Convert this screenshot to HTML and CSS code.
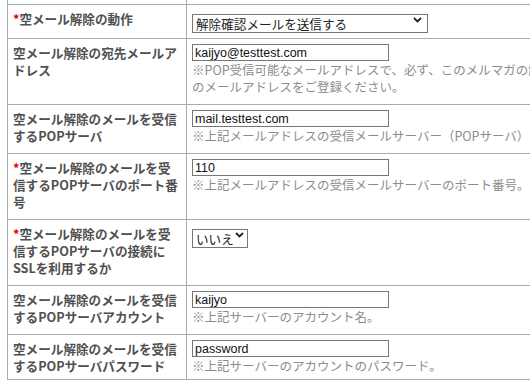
FILE: index.html
```html
<!DOCTYPE html>
<html lang="ja">
<head>
  <meta charset="UTF-8">
  <title>空メール解除設定</title>
  <link rel="stylesheet" href="styles.css">
</head>
<body>

  <table class="form-table">
    <colgroup>
      <col class="col-label">
      <col>
    </colgroup>
    <tr class="row-prev">
      <th></th>
      <td></td>
    </tr>
    <tr class="row-compact">
      <th><span class="req">*</span>空メール解除の動作</th>
      <td>
        <span class="select-wrap">
          <select class="select select-wide">
            <option>解除確認メールを送信する</option>
            <option>即時解除する</option>
          </select>
          <svg class="chevron" width="9" height="6" viewBox="0 0 9 6"><path d="M1 1l3.5 3.5L8 1" fill="none" stroke="#222" stroke-width="1.8"/></svg>
        </span>
      </td>
    </tr>
    <tr>
      <th>空メール解除の宛先メールアドレス</th>
      <td>
        <input class="text" type="text" value="kaijyo@testtest.com">
        <div class="note">※POP受信可能なメールアドレスで、必ず、このメルマガの解除専用<br>のメールアドレスをご登録ください。</div>
      </td>
    </tr>
    <tr>
      <th>空メール解除のメールを受信するPOPサーバ</th>
      <td>
        <input class="text" type="text" value="mail.testtest.com">
        <div class="note">※上記メールアドレスの受信メールサーバー（POPサーバ）</div>
      </td>
    </tr>
    <tr>
      <th><span class="req">*</span>空メール解除のメールを受信するPOPサーバのポート番号</th>
      <td>
        <input class="text" type="text" value="110">
        <div class="note">※上記メールアドレスの受信メールサーバーのポート番号。</div>
      </td>
    </tr>
    <tr>
      <th><span class="req">*</span>空メール解除のメールを受信するPOPサーバの接続にSSLを利用するか</th>
      <td>
        <span class="select-wrap">
          <select class="select select-small">
            <option>いいえ</option>
            <option>はい</option>
          </select>
          <svg class="chevron" width="9" height="6" viewBox="0 0 9 6"><path d="M1 1l3.5 3.5L8 1" fill="none" stroke="#222" stroke-width="1.8"/></svg>
        </span>
      </td>
    </tr>
    <tr>
      <th>空メール解除のメールを受信するPOPサーバアカウント</th>
      <td>
        <input class="text" type="text" value="kaijyo">
        <div class="note">※上記サーバーのアカウント名。</div>
      </td>
    </tr>
    <tr class="row-last">
      <th>空メール解除のメールを受信するPOPサーバパスワード</th>
      <td>
        <input class="text" type="text" value="password">
        <div class="note">※上記サーバーのアカウントのパスワード。</div>
      </td>
    </tr>
  </table>

</body>
</html>
```

FILE: styles.css
```css
html, body {
  margin: 0;
  overflow: hidden;
  background-color: #ffffff;
}

.form-table {
  border-collapse: collapse;
  table-layout: fixed;
  width: 640px;
  margin: -30px 0 0 7px;
  font-family: "Noto Sans CJK JP", "Noto Sans", sans-serif;
}

.col-label {
  width: 179px;
}

.form-table th,
.form-table td {
  border: 1px solid #aaaaaa;
  padding: 5px 5px 9px;
  vertical-align: top;
  text-align: left;
}

.form-table th {
  font-size: 12.6px;
  line-height: 17px;
  font-weight: bold;
  color: #505050;
}

.row-prev th,
.row-prev td {
  height: 33px;
  padding: 0;
}

.row-compact th,
.row-compact td {
  padding-bottom: 4px;
}

.row-last th,
.row-last td {
  padding-bottom: 5px;
}

.req {
  color: #e60000;
}

.text {
  display: block;
  box-sizing: border-box;
  width: 197px;
  height: 17px;
  margin: 0;
  padding: 0 2px;
  border: 1px solid #767676;
  border-radius: 0;
  font-family: "Liberation Sans", Arial, sans-serif;
  font-size: 12.5px;
  color: #111111;
  background: #ffffff;
}

.note {
  font-size: 12.5px;
  line-height: 17px;
  color: #8c8c8c;
  white-space: nowrap;
}

.select-wrap {
  position: relative;
  display: inline-block;
  vertical-align: top;
}

.select {
  -webkit-appearance: none;
  appearance: none;
  box-sizing: border-box;
  height: 19px;
  margin: 0;
  padding: 0 16px 0 3px;
  border: 1px solid #767676;
  border-radius: 0;
  background: #ffffff;
  font-family: "Noto Sans CJK JP", sans-serif;
  font-size: 12.6px;
  line-height: 17px;
  color: #222222;
}

.select-wide {
  width: 236px;
}

.select-small {
  width: 56px;
  padding-right: 12px;
}

.chevron {
  position: absolute;
  right: 6px;
  top: 7px;
  pointer-events: none;
}

.select-small + .chevron {
  right: 4px;
}
```
